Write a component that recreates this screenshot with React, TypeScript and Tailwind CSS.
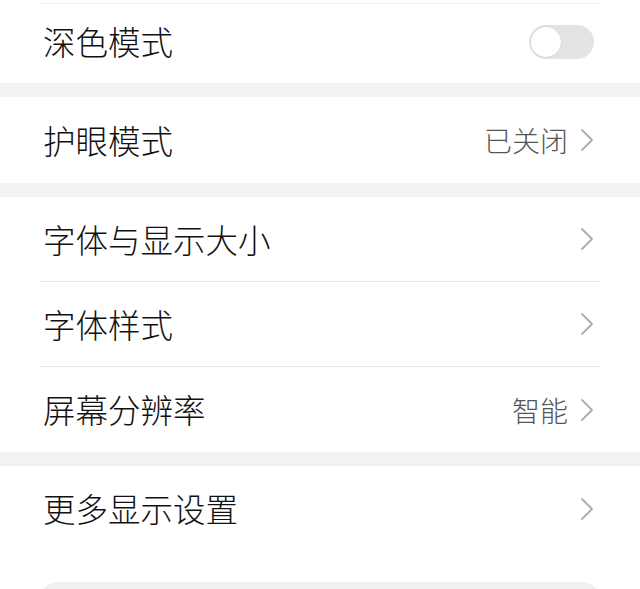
import React from "react";

const font = { fontFamily: '"Noto Sans CJK SC", "Noto Sans", sans-serif' };

function Chevron() {
  return (
    <svg width="14" height="24" viewBox="0 0 14 24" className="shrink-0">
      <path d="M2 2 L12 12 L2 22" fill="none" stroke="#adadad" strokeWidth="1.8" strokeLinecap="round" strokeLinejoin="round" />
    </svg>
  );
}

function Row({ label, value, divider }: { label: string; value?: string; divider?: boolean }) {
  return (
    <div className="px-10">
      <div className={`h-[85px] flex items-center justify-between ${divider ? "border-b border-[#e8e8e8]" : ""}`}>
        <span className="text-[32.5px] font-light text-[#111111] pl-[3px] leading-none">{label}</span>
        <div className="flex items-center gap-[12px] pr-[6px]">
          {value && <span className="text-[28px] font-light text-[#555555] leading-none">{value}</span>}
          <Chevron />
        </div>
      </div>
    </div>
  );
}

function Band() {
  return <div className="h-[14px] bg-[#f2f2f2]" />;
}

export default function App() {
  return (
    <div className="w-[640px] h-[589px] bg-white overflow-hidden" style={font}>
      <div className="h-[3px]" />
      <div className="mx-10 h-px bg-[#f0f0f0]" />
      <div className="px-10">
        <div className="h-[79px] flex items-center justify-between pb-[4px]">
          <span className="text-[32.5px] font-light text-[#111111] pl-[3px] leading-none">深色模式</span>
          <div className="w-[65px] h-[34px] rounded-full bg-[#e3e3e3] p-[2px] mr-[6px] flex items-center">
            <div className="w-[30px] h-[30px] rounded-full bg-white shadow-[0_0_2px_rgba(0,0,0,0.12)]" />
          </div>
        </div>
      </div>
      <Band />
      <div className="h-[86px] px-10">
        <div className="h-full flex items-center justify-between">
          <span className="text-[32.5px] font-light text-[#111111] pl-[3px] leading-none">护眼模式</span>
          <div className="flex items-center gap-[12px] pr-[6px]">
            <span className="text-[28px] font-light text-[#555555] leading-none">已关闭</span>
            <Chevron />
          </div>
        </div>
      </div>
      <Band />
      <Row label="字体与显示大小" divider />
      <Row label="字体样式" divider />
      <Row label="屏幕分辨率" value="智能" />
      <Band />
      <Row label="更多显示设置" />
      <div className="h-[31px]" />
      <div className="mx-10 h-[40px] rounded-t-[18px] bg-[#f0f0f0]" />
    </div>
  );
}
